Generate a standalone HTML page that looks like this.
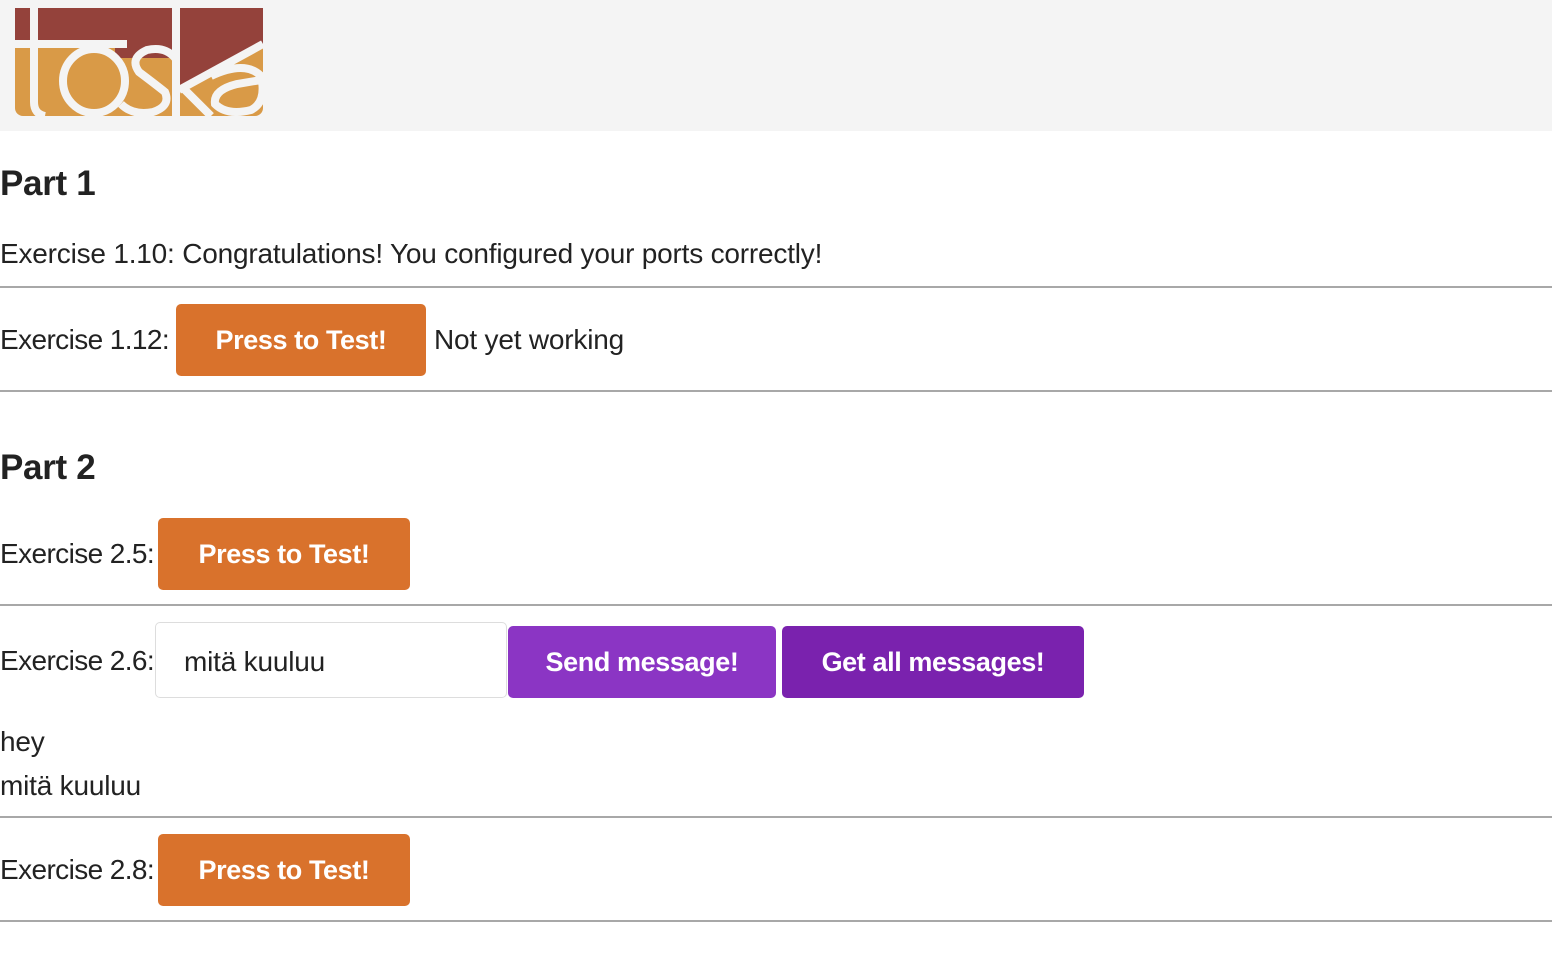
<!DOCTYPE html>
<html><head><meta charset="utf-8"><style>
html,body{margin:0;padding:0;background:#fff;width:1552px;height:956px;overflow:hidden;font-family:"Liberation Sans","DejaVu Sans",sans-serif;color:#222}
.a{position:absolute;white-space:nowrap}
.hdr{position:absolute;left:0;top:0;width:1552px;height:131px;background:#f4f4f4}
.h{font-size:35px;font-weight:bold;letter-spacing:-0.3px}
.t{font-size:28px;letter-spacing:-0.2px}
.l{letter-spacing:-0.6px}
.hr{position:absolute;left:0;width:1552px;height:0;border-top:2px solid #a8a8a8}
.btn{position:absolute;color:#fff;font-weight:bold;font-size:27px;border-radius:5px;display:flex;align-items:center;justify-content:center;letter-spacing:-0.4px}
.o{background:#d9722c}
</style></head><body>
<div class="hdr">
<svg style="position:absolute;left:15px;top:8px" width="248" height="108" viewBox="0 0 248 108">
<rect x="0" y="0" width="248" height="108" rx="8" fill="#d99a47"/>
<rect x="0" y="0" width="248" height="36" fill="#94423b"/>
<polygon points="100,0 165,0 165,50 100,50" fill="#94423b"/>
<polygon points="165,0 248,0 248,38 165,82" fill="#94423b"/>
<g fill="none" stroke="#f4f4f4" stroke-width="8">
<path d="M0,36 H112"/>
<path d="M19,0 V94 Q19,106 30,108"/>
<ellipse cx="79" cy="73" rx="31" ry="32"/>
<path d="M160,50 Q150,38 132,42 Q114,50 124,64 Q140,76 150,84 Q156,98 138,104 Q118,108 106,96"/>
<path d="M161,0 V108"/>
<path d="M164,82 L248,36"/>
<path d="M168,80 L196,108"/>
<path d="M196,68 Q230,52 246,68 Q252,94 236,102 Q212,108 200,96 Q198,82 222,76 L246,72"/>
</g>
</svg>
</div>
<div class="a h" style="left:0;top:164px">Part 1</div>
<div class="a t" style="left:0;top:238px">Exercise 1.10: Congratulations! You configured your ports correctly!</div>
<div class="hr" style="top:286px"></div>
<div class="a t l" style="left:0;top:324px">Exercise 1.12:</div>
<div class="btn o" style="left:176px;top:304px;width:250px;height:72px">Press to Test!</div>
<div class="a t" style="left:434px;top:324px">Not yet working</div>
<div class="hr" style="top:390px"></div>
<div class="a h" style="left:0;top:448px">Part 2</div>
<div class="a t l" style="left:0;top:538px">Exercise 2.5:</div>
<div class="btn o" style="left:158px;top:518px;width:252px;height:72px">Press to Test!</div>
<div class="hr" style="top:604px"></div>
<div class="a t l" style="left:0;top:645px">Exercise 2.6:</div>
<div class="a t" style="left:155px;top:622px;width:350px;height:74px;border:1px solid #ddd;border-radius:5px;box-sizing:content-box"><span style="position:absolute;left:28px;top:23px">mitä kuuluu</span></div>
<div class="btn" style="left:508px;top:626px;width:268px;height:72px;background:#8b35c4">Send message!</div>
<div class="btn" style="left:782px;top:626px;width:302px;height:72px;background:#7a22ae">Get all messages!</div>
<div class="a t" style="left:0;top:726px">hey</div>
<div class="a t" style="left:0;top:770px">mitä kuuluu</div>
<div class="hr" style="top:816px"></div>
<div class="a t l" style="left:0;top:854px">Exercise 2.8:</div>
<div class="btn o" style="left:158px;top:834px;width:252px;height:72px">Press to Test!</div>
<div class="hr" style="top:920px"></div>
</body></html>
